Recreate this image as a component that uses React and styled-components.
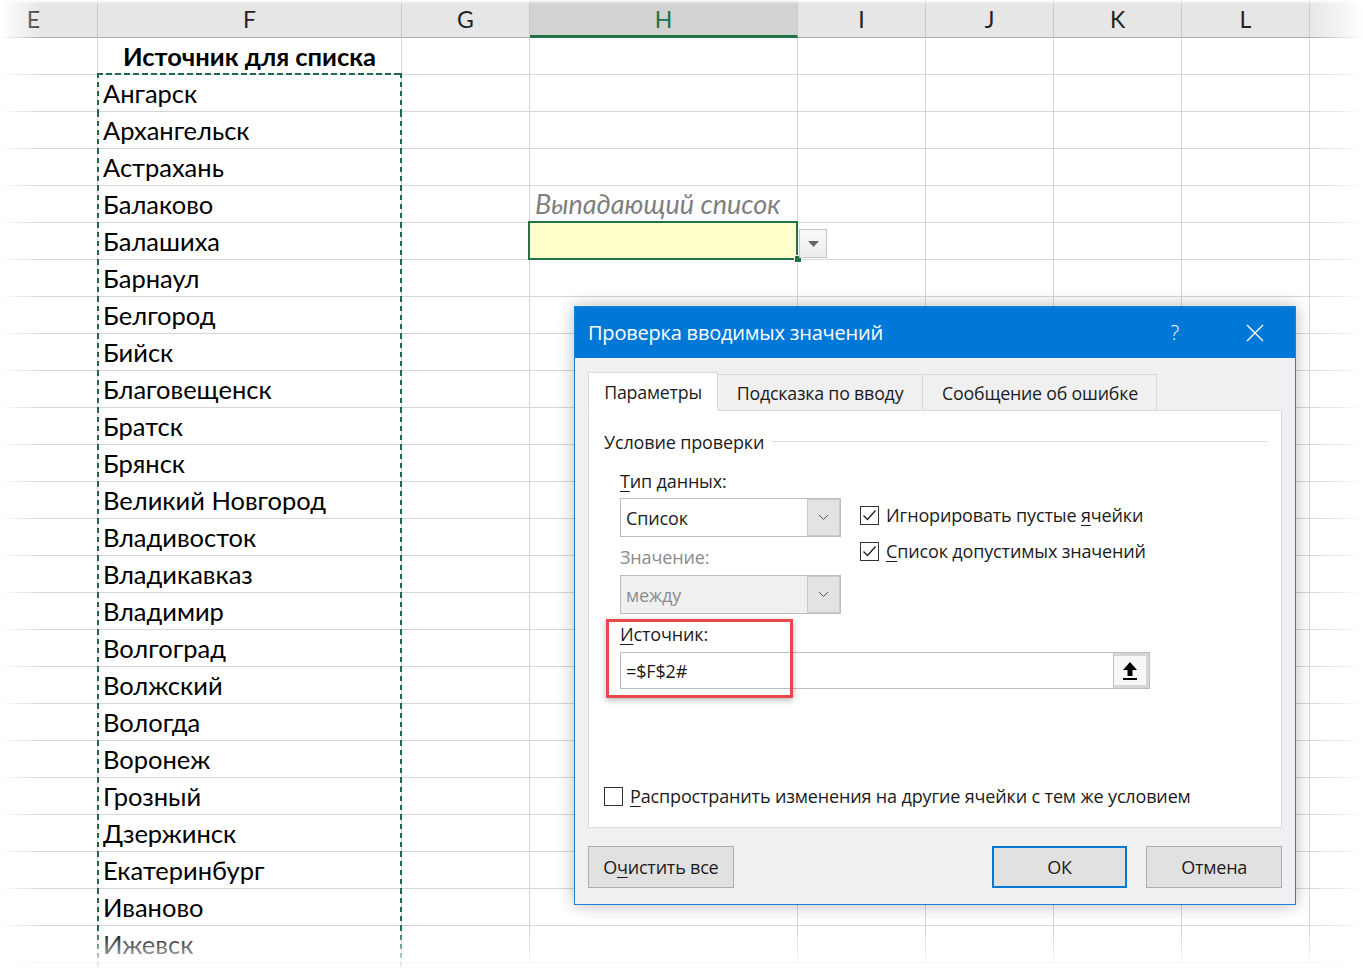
import React from 'react';
import styled, { createGlobalStyle, css } from 'styled-components';

const GlobalStyle = createGlobalStyle`
  html, body {
    margin: 0;
    padding: 0;
    background: #fff;
  }
`;

const COLUMNS = [
  { key: 'E', w: 128 },
  { key: 'F', w: 304 },
  { key: 'G', w: 128 },
  { key: 'H', w: 268 },
  { key: 'I', w: 128 },
  { key: 'J', w: 128 },
  { key: 'K', w: 128 },
  { key: 'L', w: 128 },
  { key: 'M', w: 128, hidden: true },
];

const CITIES = [
  'Ангарск', 'Архангельск', 'Астрахань', 'Балаково', 'Балашиха', 'Барнаул',
  'Белгород', 'Бийск', 'Благовещенск', 'Братск', 'Брянск', 'Великий Новгород',
  'Владивосток', 'Владикавказ', 'Владимир', 'Волгоград', 'Волжский', 'Вологда',
  'Воронеж', 'Грозный', 'Дзержинск', 'Екатеринбург', 'Иваново', 'Ижевск',
];

const Page = styled.div`
  position: relative;
  width: 1363px;
  height: 969px;
  overflow: hidden;
  background: #fff;
`;

const Sheet = styled.div`
  margin-left: -30px;
  font-family: Lato, 'Open Sans', sans-serif;
  color: #000;
`;

const HeaderRow = styled.div`
  display: flex;
  height: 38px;
`;

const ColHead = styled.div`
  flex: 0 0 ${(p) => p.$w}px;
  box-sizing: border-box;
  display: flex;
  align-items: center;
  justify-content: center;
  background: #e6e6e6;
  border-right: 1px solid #c9c9c9;
  border-bottom: 1px solid #ababab;
  font-size: 23px;
  color: #222;
  ${(p) =>
    p.$selected &&
    css`
      background: #d2d2d2;
      color: #217346;
      border-bottom: 3px solid #217346;
      padding-top: 2px;
    `}
`;

const Row = styled.div`
  display: flex;
  height: 37px;
`;

const Cell = styled.div`
  position: relative;
  flex: 0 0 ${(p) => p.$w}px;
  box-sizing: border-box;
  display: flex;
  align-items: flex-end;
  justify-content: ${(p) => (p.$center ? 'center' : 'flex-start')};
  padding: 0 5px 3px;
  border-right: 1px solid #d6d6d6;
  border-bottom: 1px solid #d6d6d6;
  font-size: 25.5px;
  line-height: 30px;
  white-space: nowrap;
  font-weight: ${(p) => (p.$bold ? 700 : 400)};

  ${(p) =>
    p.$note &&
    css`
      font-style: italic;
      color: #7f7f7f;
      font-size: 27px;
    `}

  ${(p) =>
    p.$marquee &&
    css`
      &::before {
        content: '';
        position: absolute;
        left: -1px;
        right: -1px;
        top: ${p.$marqueeTop ? '-2px' : '0'};
        bottom: -1px;
        pointer-events: none;
        background:
          repeating-linear-gradient(to bottom, #1e6b45 0 5px, transparent 5px 9px) left top / 2px 100% no-repeat,
          repeating-linear-gradient(to bottom, #1e6b45 0 5px, transparent 5px 9px) right top / 2px 100% no-repeat
          ${p.$marqueeTop
            ? ', repeating-linear-gradient(to right, #1e6b45 0 6px, transparent 6px 9px) left top / 100% 2px no-repeat'
            : ''};
      }
    `}

  ${(p) =>
    p.$active &&
    css`
      background: #ffffcc;
      &::after {
        content: '';
        position: absolute;
        left: -2px;
        top: -2px;
        right: -1px;
        bottom: -1px;
        border: 2px solid #217346;
        pointer-events: none;
      }
    `}
`;

const FillHandle = styled.span`
  position: absolute;
  right: -5px;
  bottom: -4px;
  width: 6px;
  height: 6px;
  background: #217346;
  border: 1px solid #fff;
  z-index: 2;
`;

const DropArrowBtn = styled.span`
  position: absolute;
  left: calc(100% + 2px);
  top: 6px;
  width: 28px;
  height: 29px;
  box-sizing: border-box;
  border: 1px solid #c6c6c6;
  background: linear-gradient(#fafafa, #ececec);
  display: flex;
  align-items: center;
  justify-content: center;
  z-index: 2;
`;

const Vignette = styled.div`
  position: absolute;
  inset: 0;
  pointer-events: none;
  background:
    linear-gradient(to right, #fff 0, rgba(255, 255, 255, 0) 42px),
    linear-gradient(to left, #fff 0, rgba(255, 255, 255, 0.6) 20px, rgba(255, 255, 255, 0) 56px),
    linear-gradient(to top, #fff 0, rgba(255, 255, 255, 0.6) 14px, rgba(255, 255, 255, 0) 40px),
    linear-gradient(to bottom, #fff 0, rgba(255, 255, 255, 0) 4px);
`;

/* ---------- dialog ---------- */

const Dialog = styled.div`
  position: absolute;
  left: 574px;
  top: 306px;
  width: 722px;
  box-sizing: border-box;
  background: #f0f0f0;
  border: 1px solid #1a82d8;
  box-shadow: 0 0 16px rgba(0, 0, 0, 0.28);
  font-family: 'Segoe UI', 'Open Sans', sans-serif;
  color: #1b1b1b;
  display: flex;
  flex-direction: column;
`;

const TitleBar = styled.div`
  height: 51px;
  background: #0078d7;
  color: #fff;
  display: flex;
  align-items: center;
  padding-left: 13px;
`;

const Title = styled.div`
  flex: 1;
  font-size: 20px;
  letter-spacing: -0.2px;
`;

const TitleBtn = styled.div`
  width: 46px;
  height: 51px;
  display: flex;
  align-items: center;
  justify-content: center;
  font-size: 20px;
  font-weight: 300;
  margin-left: ${(p) => p.$gap || 0}px;
  margin-right: ${(p) => p.$end || 0}px;
`;

const Body = styled.div`
  padding: 14px 13px 16px;
`;

const Tabs = styled.div`
  display: flex;
  align-items: flex-end;
  height: 39px;
  position: relative;
  z-index: 1;
  margin-bottom: -1px;
`;

const Tab = styled.div`
  box-sizing: border-box;
  width: ${(p) => p.$w}px;
  height: ${(p) => (p.$active ? 39 : 37)}px;
  display: flex;
  align-items: center;
  justify-content: center;
  font-size: 17.8px;
  letter-spacing: -0.2px;
  background: ${(p) => (p.$active ? '#fff' : '#f0f0f0')};
  border: 1px solid #d9d9d9;
  border-bottom: ${(p) => (p.$active ? '1px solid #fff' : '1px solid #d9d9d9')};
  margin-right: ${(p) => (p.$active ? 0 : 1)}px;
  ${(p) => !p.$active && css`border-left: none;`}
`;

const Panel = styled.div`
  box-sizing: border-box;
  height: 418px;
  background: #fff;
  border: 1px solid #dadada;
  padding: 19px 14px 19px 15px;
  display: flex;
  flex-direction: column;
  font-size: 18px;
  letter-spacing: -0.15px;
`;

const GroupHead = styled.div`
  display: flex;
  align-items: center;
  gap: 8px;
  height: 24px;
  &::after {
    content: '';
    flex: 1;
    height: 1px;
    background: #dcdcdc;
    margin-top: -1px;
  }
`;

const Indent = styled.div`
  margin-left: 16px;
  margin-top: 15px;
`;

const Criteria = styled.div`
  display: flex;
`;

const Column = styled.div`
  display: flex;
  flex-direction: column;
`;

const Label = styled.div`
  height: 24px;
  line-height: 24px;
  color: ${(p) => (p.$disabled ? '#8a8a8a' : '#1b1b1b')};
  margin-top: ${(p) => p.$mt || 0}px;
`;

const U = styled.span`
  text-decoration: underline;
  text-underline-offset: 3px;
  text-decoration-thickness: 1px;
`;

const Combo = styled.div`
  box-sizing: border-box;
  width: 221px;
  height: 39px;
  margin-top: ${(p) => p.$mt || 0}px;
  display: flex;
  border: 1px solid #bdbdbd;
  background: ${(p) => (p.$disabled ? '#f0f0f0' : '#fff')};
  color: ${(p) => (p.$disabled ? '#8c8c8c' : '#1b1b1b')};
`;

const ComboText = styled.div`
  flex: 1;
  display: flex;
  align-items: center;
  padding-left: 5px;
`;

const ComboBtn = styled.div`
  width: 33px;
  box-sizing: border-box;
  background: #e3e3e3;
  border: 1px solid #cbcbcb;
  display: flex;
  align-items: center;
  justify-content: center;
`;

const Checks = styled.div`
  display: flex;
  flex-direction: column;
  gap: 12px;
  padding-top: 34px;
  margin-left: 19px;
`;

const CheckRow = styled.div`
  display: flex;
  align-items: center;
  gap: 7px;
  height: 24px;
`;

const Box = styled.span`
  width: 19px;
  height: 19px;
  box-sizing: border-box;
  border: 1px solid #333;
  background: #fff;
  display: flex;
  align-items: center;
  justify-content: center;
`;

const Source = styled.div`
  position: relative;
  margin-top: 8px;
`;

const SourceInput = styled.div`
  box-sizing: border-box;
  width: 530px;
  height: 37px;
  margin-top: 6px;
  display: flex;
  border: 1px solid #bdbdbd;
  background: #fff;
`;

const RefBtn = styled.div`
  width: 36px;
  box-sizing: border-box;
  border: 3px solid #d6d6d6;
  border-left: 1px solid #bdbdbd;
  background: #f7f7f7;
  display: flex;
  align-items: center;
  justify-content: center;
`;

const Highlight = styled.div`
  position: absolute;
  left: -14px;
  top: -3px;
  width: 187px;
  height: 79px;
  box-sizing: border-box;
  border: 3px solid #e8474c;
  box-shadow: 0 2px 6px rgba(0, 0, 0, 0.3);
  pointer-events: none;
`;

const Spread = styled(CheckRow)`
  margin-top: auto;
`;

const Footer = styled.div`
  display: flex;
  align-items: center;
  margin-top: 18px;
`;

const Button = styled.div`
  box-sizing: border-box;
  width: ${(p) => p.$w}px;
  height: 42px;
  display: flex;
  align-items: center;
  justify-content: center;
  background: #e1e1e1;
  border: ${(p) => (p.$primary ? '2px solid #0078d7' : '1px solid #adadad')};
  font-size: 18px;
  letter-spacing: -0.2px;
  margin-left: ${(p) => p.$ml || 0}px;
`;

const Chevron = () => (
  <svg width="11" height="7" viewBox="0 0 11 7">
    <path d="M1 1 L5.5 5.5 L10 1" fill="none" stroke="#555" strokeWidth="1" />
  </svg>
);

const Tick = () => (
  <svg width="15" height="13" viewBox="0 0 15 13">
    <path d="M1.5 6.5 L5.5 10.5 L13.5 1.5" fill="none" stroke="#222" strokeWidth="1.4" />
  </svg>
);

function Check({ checked }) {
  return <Box>{checked && <Tick />}</Box>;
}

function SheetGrid() {
  const rows = [null, ...CITIES, ''];
  return (
    <Sheet>
      <HeaderRow>
        {COLUMNS.map((c) => (
          <ColHead key={c.key} $w={c.w} $selected={c.key === 'H'}>
            {c.hidden ? '' : c.key}
          </ColHead>
        ))}
      </HeaderRow>
      {rows.map((city, i) => (
        <Row key={i}>
          {COLUMNS.map((c) => {
            if (c.key === 'F') {
              if (i === 0) {
                return (
                  <Cell key={c.key} $w={c.w} $center $bold>
                    Источник для списка
                  </Cell>
                );
              }
              return (
                <Cell key={c.key} $w={c.w} $marquee $marqueeTop={i === 1}>
                  {city}
                </Cell>
              );
            }
            if (c.key === 'H' && i === 4) {
              return (
                <Cell key={c.key} $w={c.w} $note>
                  Выпадающий список
                </Cell>
              );
            }
            if (c.key === 'H' && i === 5) {
              return (
                <Cell key={c.key} $w={c.w} $active>
                  <FillHandle />
                  <DropArrowBtn>
                    <svg width="11" height="6" viewBox="0 0 11 6">
                      <path d="M0 0 H11 L5.5 6 Z" fill="#666" />
                    </svg>
                  </DropArrowBtn>
                </Cell>
              );
            }
            return <Cell key={c.key} $w={c.w} />;
          })}
        </Row>
      ))}
    </Sheet>
  );
}

function ValidationDialog() {
  return (
    <Dialog>
      <TitleBar>
        <Title>Проверка вводимых значений</Title>
        <TitleBtn>?</TitleBtn>
        <TitleBtn $gap={34} $end={17}>
          <svg width="18" height="18" viewBox="0 0 18 18">
            <path d="M1 1 L17 17 M17 1 L1 17" stroke="#fff" strokeWidth="1.3" />
          </svg>
        </TitleBtn>
      </TitleBar>
      <Body>
        <Tabs>
          <Tab $w={130} $active>Параметры</Tab>
          <Tab $w={205}>Подсказка по вводу</Tab>
          <Tab $w={233}>Сообщение об ошибке</Tab>
        </Tabs>
        <Panel>
          <GroupHead>Условие проверки</GroupHead>
          <Indent>
            <Criteria>
              <Column>
                <Label>
                  <U>Т</U>ип данных:
                </Label>
                <Combo $mt={5}>
                  <ComboText>Список</ComboText>
                  <ComboBtn>
                    <Chevron />
                  </ComboBtn>
                </Combo>
                <Label $mt={8} $disabled>
                  Значение:
                </Label>
                <Combo $mt={6} $disabled>
                  <ComboText>между</ComboText>
                  <ComboBtn>
                    <Chevron />
                  </ComboBtn>
                </Combo>
              </Column>
              <Checks>
                <CheckRow>
                  <Check checked />
                  <span>
                    Игнорировать пустые <U>я</U>чейки
                  </span>
                </CheckRow>
                <CheckRow>
                  <Check checked />
                  <span>
                    <U>С</U>писок допустимых значений
                  </span>
                </CheckRow>
              </Checks>
            </Criteria>
            <Source>
              <Label>
                <U>И</U>сточник:
              </Label>
              <SourceInput>
                <ComboText>=$F$2#</ComboText>
                <RefBtn>
                  <svg width="16" height="20" viewBox="0 0 16 20">
                    <path d="M8 1 L15 9 L10.5 9 L10.5 15 L5.5 15 L5.5 9 L1 9 Z" fill="#000" />
                    <rect x="1" y="17" width="14" height="2" fill="#000" />
                  </svg>
                </RefBtn>
              </SourceInput>
              <Highlight />
            </Source>
          </Indent>
          <Spread>
            <Check />
            <span>
              <U>Р</U>аспространить изменения на другие ячейки с тем же условием
            </span>
          </Spread>
        </Panel>
        <Footer>
          <Button $w={146}>
            <span>
              О<U>ч</U>истить все
            </span>
          </Button>
          <Button $w={136} $ml={258} $primary>
            ОК
          </Button>
          <Button $w={136} $ml={19}>
            Отмена
          </Button>
        </Footer>
      </Body>
    </Dialog>
  );
}

export default function App() {
  return (
    <>
      <GlobalStyle />
      <Page>
        <SheetGrid />
        <Vignette />
        <ValidationDialog />
      </Page>
    </>
  );
}
